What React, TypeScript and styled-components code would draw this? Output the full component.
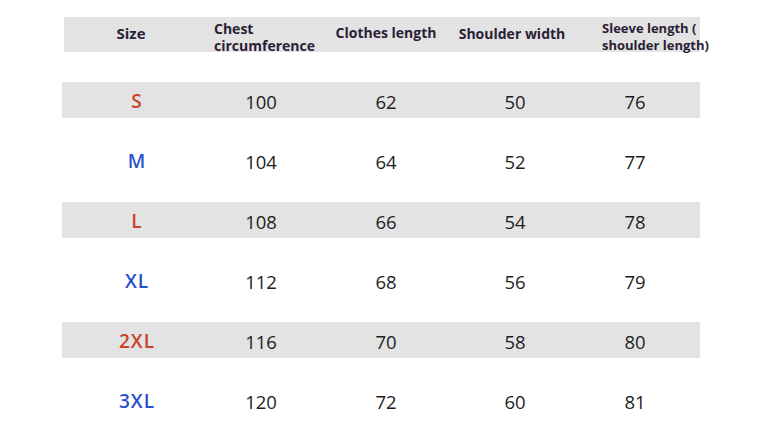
import React from "react";
import styled, { createGlobalStyle } from "styled-components";

const Global = createGlobalStyle`
  html, body { margin: 0; padding: 0; background: #ffffff; }
  body { font-family: "Open Sans", "Liberation Sans", sans-serif; }
`;

const Page = styled.div`
  width: 772px;
  height: 428px;
  padding: 17px 0 0 64px;
  box-sizing: border-box;
  overflow: hidden;
`;

const cols = "146px 102px 148px 110px 130px";

const HeaderBar = styled.div`
  display: grid;
  grid-template-columns: ${cols};
  height: 35px;
  width: 636px;
  background: #e3e3e3;
  margin-bottom: 18px;
`;

const HeadCell = styled.div<{
  $align?: "left" | "center";
  $shift?: number;
  $drop?: number;
  $size?: number;
}>`
  display: flex;
  flex-direction: column;
  align-items: ${(p) => (p.$align === "left" ? "flex-start" : "center")};
  justify-content: center;
  padding-left: ${(p) => (p.$align === "left" ? 4 : 0)}px;
  transform: translate(${(p) => p.$shift ?? 0}px, ${(p) => p.$drop ?? 0}px);
  font-family: "Open Sans", "Liberation Sans", sans-serif;
  font-weight: 700;
  font-size: ${(p) => p.$size ?? 14}px;
  line-height: 17px;
  color: #2a2136;
  white-space: nowrap;
`;

const Line = styled.span`
  display: block;
`;

const Row = styled.div<{ $shaded: boolean }>`
  display: grid;
  grid-template-columns: ${cols};
  width: 636px;
  height: 60px;
  align-items: center;
  position: relative;
  &::before {
    content: "";
    position: absolute;
    left: -2px;
    right: 0;
    top: 12px;
    height: 36px;
    background: ${(p) => (p.$shaded ? "#e3e3e3" : "transparent")};
    z-index: 0;
  }
`;

const Cell = styled.div`
  position: relative;
  z-index: 1;
  text-align: center;
  font-family: "Open Sans", "Liberation Sans", sans-serif;
  font-size: 18.5px;
  color: #1e1e1e;
  padding-top: 2px;
`;

const SizeCell = styled(Cell)<{ $tone: "red" | "blue" }>`
  color: ${(p) => (p.$tone === "red" ? "#c9432b" : "#2752c9")};
  font-weight: 600;
  font-size: 19px;
  letter-spacing: 1px;
`;

const rows = [
  { size: "S", v: [100, 62, 50, 76] },
  { size: "M", v: [104, 64, 52, 77] },
  { size: "L", v: [108, 66, 54, 78] },
  { size: "XL", v: [112, 68, 56, 79] },
  { size: "2XL", v: [116, 70, 58, 80] },
  { size: "3XL", v: [120, 72, 60, 81] },
];

export default function App() {
  return (
    <>
      <Global />
      <Page>
        <HeaderBar>
          <HeadCell $shift={-6} $drop={-1} $size={15}>
            Size
          </HeadCell>
          <HeadCell $align="left" $drop={2}>
            <Line>Chest</Line>
            <Line>circumference</Line>
          </HeadCell>
          <HeadCell $drop={-2}>Clothes length</HeadCell>
          <HeadCell $shift={-3} $drop={-1}>
            Shoulder width
          </HeadCell>
          <HeadCell $align="left" $size={13} $shift={28} $drop={2}>
            <Line>Sleeve length (</Line>
            <Line>shoulder length)</Line>
          </HeadCell>
        </HeaderBar>
        {rows.map((r, i) => (
          <Row key={r.size} $shaded={i % 2 === 0}>
            <SizeCell $tone={i % 2 === 0 ? "red" : "blue"}>{r.size}</SizeCell>
            {r.v.map((n, j) => (
              <Cell key={j}>{n}</Cell>
            ))}
          </Row>
        ))}
      </Page>
    </>
  );
}
